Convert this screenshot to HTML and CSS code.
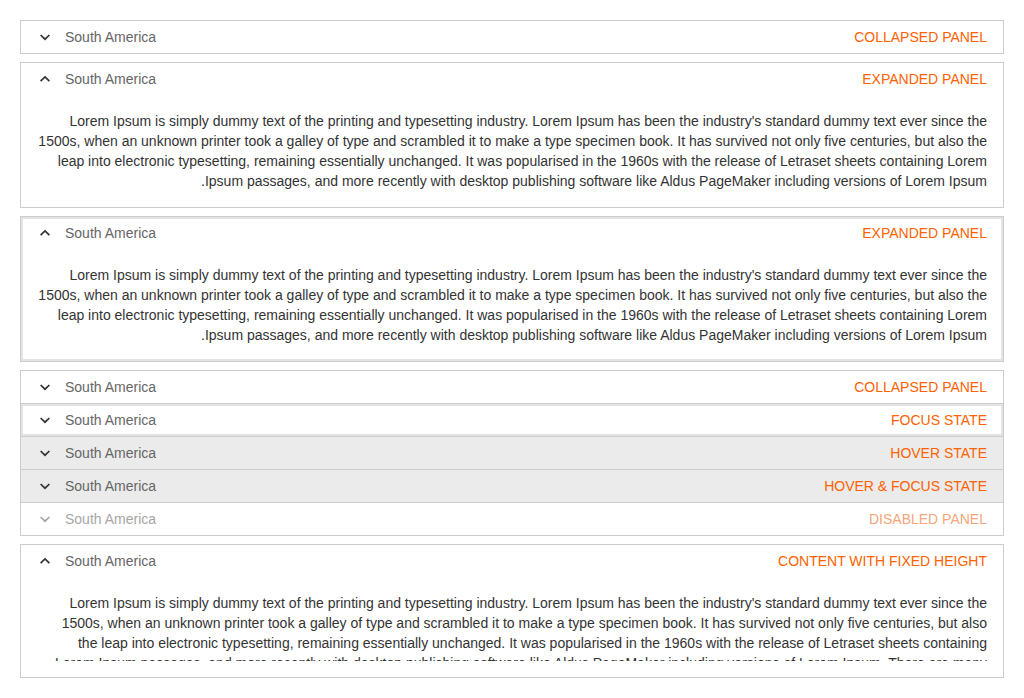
FILE: index.html
```html
<!DOCTYPE html>
<html>
<head>
<meta charset="utf-8">
<link rel="stylesheet" href="styles.css">
</head>
<body>
<div class="page">
  <div class="panel">
    <div class="header">
      <svg class="chev" viewBox="0 0 16 16"><path d="M3.6 6 8 10.2 12.4 6" /></svg>
      <span class="title">South America</span>
      <span class="label">COLLAPSED PANEL</span>
    </div>
  </div>

  <div class="panel">
    <div class="header">
      <svg class="chev" viewBox="0 0 16 16"><path d="M3.6 10.2 8 6 12.4 10.2" /></svg>
      <span class="title">South America</span>
      <span class="label">EXPANDED PANEL</span>
    </div>
    <div class="content" dir="rtl">Lorem Ipsum is simply dummy text of the printing and typesetting industry. Lorem Ipsum has been the industry's standard dummy text ever since the 1500s, when an unknown printer took a galley of type and scrambled it to make a type specimen book. It has survived not only five centuries, but also the leap into electronic typesetting, remaining essentially unchanged. It was popularised in the 1960s with the release of Letraset sheets containing Lorem Ipsum passages, and more recently with desktop publishing software like Aldus PageMaker including versions of Lorem Ipsum.</div>
  </div>

  <div class="panel focused">
    <div class="header">
      <svg class="chev" viewBox="0 0 16 16"><path d="M3.6 10.2 8 6 12.4 10.2" /></svg>
      <span class="title">South America</span>
      <span class="label">EXPANDED PANEL</span>
    </div>
    <div class="content" dir="rtl">Lorem Ipsum is simply dummy text of the printing and typesetting industry. Lorem Ipsum has been the industry's standard dummy text ever since the 1500s, when an unknown printer took a galley of type and scrambled it to make a type specimen book. It has survived not only five centuries, but also the leap into electronic typesetting, remaining essentially unchanged. It was popularised in the 1960s with the release of Letraset sheets containing Lorem Ipsum passages, and more recently with desktop publishing software like Aldus PageMaker including versions of Lorem Ipsum.</div>
  </div>

  <div class="group">
    <div class="row">
      <svg class="chev" viewBox="0 0 16 16"><path d="M3.6 6 8 10.2 12.4 6" /></svg>
      <span class="title">South America</span>
      <span class="label">COLLAPSED PANEL</span>
    </div>
    <div class="row focused">
      <svg class="chev" viewBox="0 0 16 16"><path d="M3.6 6 8 10.2 12.4 6" /></svg>
      <span class="title">South America</span>
      <span class="label">FOCUS STATE</span>
    </div>
    <div class="row hover">
      <svg class="chev" viewBox="0 0 16 16"><path d="M3.6 6 8 10.2 12.4 6" /></svg>
      <span class="title">South America</span>
      <span class="label">HOVER STATE</span>
    </div>
    <div class="row hover">
      <svg class="chev" viewBox="0 0 16 16"><path d="M3.6 6 8 10.2 12.4 6" /></svg>
      <span class="title">South America</span>
      <span class="label">HOVER &amp; FOCUS STATE</span>
    </div>
    <div class="row disabled">
      <svg class="chev" viewBox="0 0 16 16"><path d="M3.6 6 8 10.2 12.4 6" /></svg>
      <span class="title">South America</span>
      <span class="label">DISABLED PANEL</span>
    </div>
  </div>

  <div class="panel">
    <div class="header">
      <svg class="chev" viewBox="0 0 16 16"><path d="M3.6 10.2 8 6 12.4 10.2" /></svg>
      <span class="title">South America</span>
      <span class="label">CONTENT WITH FIXED HEIGHT</span>
    </div>
    <div class="content fixed">
      <div class="clip" dir="rtl">Lorem Ipsum is simply dummy text of the printing and typesetting industry. Lorem Ipsum has been the industry's standard dummy text ever since the 1500s, when an unknown printer took a galley of type and scrambled it to make a type specimen book. It has survived not only five centuries, but also the leap into electronic typesetting, remaining essentially unchanged. It was popularised in the 1960s with the release of Letraset sheets containing Lorem Ipsum passages, and more recently with desktop publishing software like Aldus PageMaker including versions of Lorem Ipsum. There are many variations of passages of Lorem Ipsum available, but the majority have suffered alteration in some form.</div>
    </div>
  </div>
</div>
</body>
</html>
```

FILE: styles.css
```css
html, body {
  margin: 0;
  padding: 0;
  background: #ffffff;
}
body {
  font-family: "Liberation Sans", Arial, sans-serif;
  font-size: 14px;
  line-height: 20px;
  color: #333333;
}
.page {
  padding: 20px 20px 0 20px;
  display: flex;
  flex-direction: column;
  gap: 8px;
}
.panel {
  border: 1px solid #cccccc;
  background: #fff;
}
.panel.focused {
  box-shadow: inset 0 0 0 2px #e3e3e3;
}
.header, .row {
  height: 32px;
  display: flex;
  align-items: center;
  padding: 0 16px;
}
.chev {
  width: 16px;
  height: 16px;
  margin-right: 12px;
  flex: none;
}
.chev path {
  fill: none;
  stroke: #333333;
  stroke-width: 1.7;
}
.title {
  color: #666666;
  flex: 1;
}
.label {
  color: #ff6200;
}
.content {
  padding: 16px;
  text-align: right;
  color: #333333;
}
.clip {
  height: 68px;
  overflow: hidden;
  padding-left: 16px;
}
.group {
  border: 1px solid #cccccc;
  display: flex;
  flex-direction: column;
}
.row {
  border-bottom: 1px solid #cccccc;
}
.row:last-child {
  border-bottom: none;
}
.row.focused {
  box-shadow: inset 0 0 0 2px #e3e3e3;
}
.row.hover {
  background: #ebebeb;
}
.row.disabled .title {
  color: #a6a6a6;
}
.row.disabled .label {
  color: #f5a57a;
}
.row.disabled .chev path {
  stroke: #a6a6a6;
}
```
